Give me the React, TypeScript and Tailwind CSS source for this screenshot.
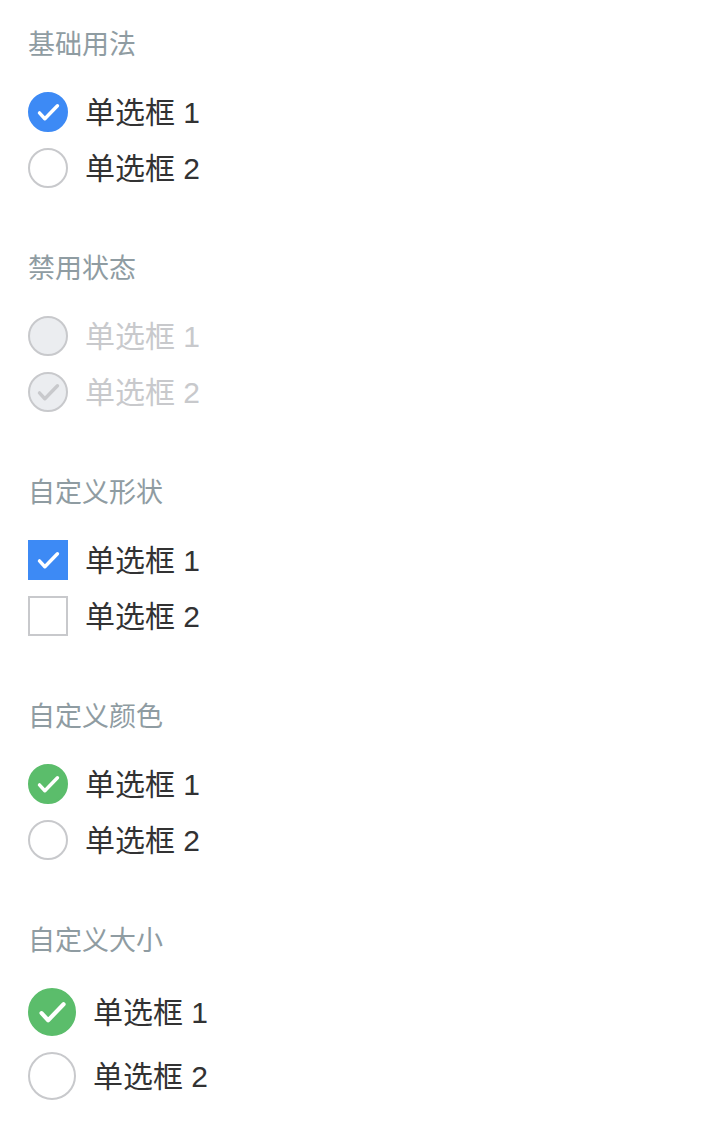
import React from 'react';

type Shape = 'round' | 'square';

interface RadioProps {
  label: string;
  checked?: boolean;
  disabled?: boolean;
  shape?: Shape;
  color?: string;
  big?: boolean;
}

const Check = ({ stroke, size }: { stroke: string; size: number }) => (
  <svg width={size} height={size} viewBox="0 0 40 40" fill="none">
    <polyline
      points="10.5,21 16.5,27.5 30.5,13"
      stroke={stroke}
      strokeWidth="3.8"
      strokeLinecap="round"
      strokeLinejoin="round"
    />
  </svg>
);

const Radio: React.FC<RadioProps> = ({ label, checked, disabled, shape = 'round', color = 'blue', big }) => {
  const round = shape === 'round' ? 'rounded-full' : '';
  const size = big ? 'w-12 h-12' : 'w-10 h-10';
  let box = 'bg-white border-[#c8c9cc]';
  if (disabled) box = 'bg-[#ebedf0] border-[#c8c9cc]';
  else if (checked && color === 'green') box = 'bg-[#5bbd6b] border-[#5bbd6b]';
  else if (checked) box = 'bg-[#3d8af5] border-[#3d8af5]';

  return (
    <div className={`flex items-center ${big ? 'h-16' : 'h-14'}`}>
      <div className={`${size} ${round} ${box} border-2 flex items-center justify-center shrink-0`}>
        {checked && <Check stroke={disabled ? '#c8c9cc' : '#ffffff'} size={big ? 44 : 36} />}
      </div>
      <span
        className={`pl-[17px] text-[30px] leading-none mt-px ${disabled ? 'text-[#c8c9cc]' : 'text-[#323233]'}`}
      >
        {label}
      </span>
    </div>
  );
};

const Section = ({ title, children }: { title: string; children: React.ReactNode }) => (
  <div className="pt-[25px] pb-7">
    <h2 className="h-10 leading-10 text-[27px] text-[#8f9ca2] mb-[19px] font-normal">{title}</h2>
    {children}
  </div>
);

export default function App() {
  return (
    <div
      className="w-[710px] min-h-[1122px] bg-white px-7"
      style={{ fontFamily: '"Liberation Sans", "Noto Sans CJK SC", sans-serif' }}
    >
      <Section title="基础用法">
        <Radio label="单选框 1" checked />
        <Radio label="单选框 2" />
      </Section>
      <Section title="禁用状态">
        <Radio label="单选框 1" disabled />
        <Radio label="单选框 2" disabled checked />
      </Section>
      <Section title="自定义形状">
        <Radio label="单选框 1" checked shape="square" />
        <Radio label="单选框 2" shape="square" />
      </Section>
      <Section title="自定义颜色">
        <Radio label="单选框 1" checked color="green" />
        <Radio label="单选框 2" />
      </Section>
      <Section title="自定义大小">
        <Radio label="单选框 1" checked color="green" big />
        <Radio label="单选框 2" big />
      </Section>
    </div>
  );
}
